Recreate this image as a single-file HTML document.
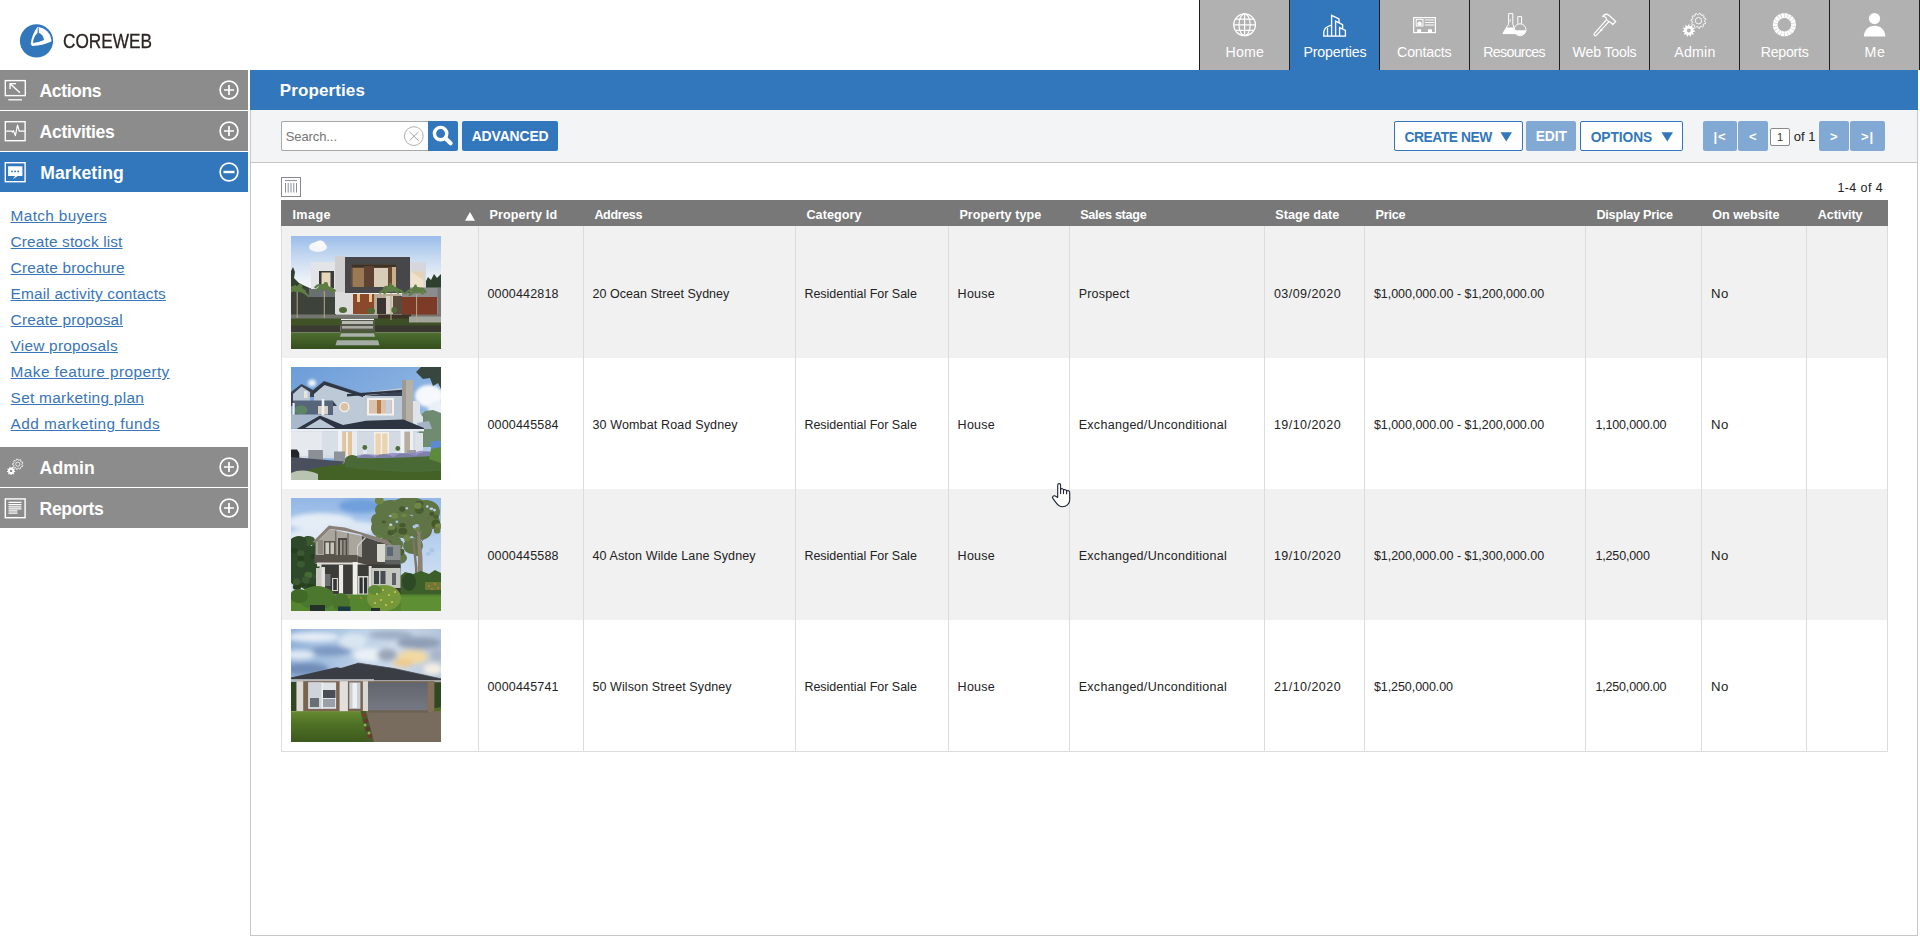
<!DOCTYPE html>
<html lang="en">
<head>
<meta charset="utf-8">
<title>Properties - COREWEB</title>
<style>
*{box-sizing:border-box;margin:0;padding:0}
html,body{width:1920px;height:937px;overflow:hidden;background:#fff}
body{font-family:"Liberation Sans",Arial,sans-serif;color:#222;position:relative}
.a{position:absolute}
.t{position:absolute;white-space:pre}
#brand{position:absolute;left:62.5px;top:27px;font-size:20.4px;line-height:28px;color:#2a2422;-webkit-text-stroke:.3px #2a2422;transform-origin:0 50%;transform:scaleX(.845);white-space:nowrap}
.tab{position:absolute;top:0;width:91px;height:70px;background:#b1b1b1;border-left:1px solid #1f1f1f}
.tab.on{background:#3277bc}
.tab svg{position:absolute;left:31px;top:11px;width:28px;height:28px;overflow:visible}
.si{position:absolute;left:0;width:248px;height:40px;background:#8c8c8c}
.si.on{background:#3277bc}
.si svg{position:absolute;top:9px;width:22px;height:22px;overflow:visible}
.si svg.ic{left:4px}
.si svg.pm{left:218px}
.btn{position:absolute;top:121px;height:30px;border-radius:2px}
.bb{background:#3277bc}
.bl{background:#82a9d4}
.bw{background:#fff;border:1px solid #3277bc}
.row{position:absolute;left:281px;width:1607px;height:131.33px;border-left:1px solid #dcdcdc;border-right:1px solid #dcdcdc}
.row.g{background:#f1f1f1}
.vl{position:absolute;top:226px;width:1px;height:525px;background:#dcdcdc}
.ph{position:absolute;left:291px;width:150px;height:113px;display:block}
</style>
</head>
<body>
<header>
<svg class="a" style="left:19px;top:23px" width="36" height="36" viewBox="19 23 36 36"><circle cx="36.5" cy="40.9" r="16.6" fill="#3277bc"/><path d="M37.5 26.9A14.6 14.6 0 0 1 51.4 41.6C45.5 44.4 38.3 46 32.2 45.9L30.7 43.9C31.6 37.2 34 31 37.5 26.9Z" fill="#fff"/><path d="M37.8 27.9L38.7 27.6L38.8 32.8C41.8 33.9 43.7 36.9 44 40.1C40.6 41.6 36.6 42.8 33 43.1C33.1 39.2 34.7 35.2 37.5 33Z" fill="#3277bc"/></svg>

<div id="brand">COREWEB</div>
<nav>
<div class="tab" style="left:1199px"><svg viewBox="0 0 28 28"><g fill="none" stroke="#fff" stroke-width="1.2"><circle cx="13.6" cy="13.8" r="10.9"/><ellipse cx="13.6" cy="13.8" rx="5.6" ry="10.9"/><path d="M13.6 2.9V24.7M2.7 13.8H24.5M4.4 8.2H22.8M4.4 19.4H22.8"/></g></svg>
</div>
<span class="t" style="left:1225.6px;top:42.2px;font-size:14.2px;line-height:20px;letter-spacing:0.114px;color:#fff;">Home</span>
<div class="tab on" style="left:1289px"><svg viewBox="0 0 28 28"><g fill="none" stroke="#fff" stroke-width="1.35" stroke-linejoin="miter"><path d="M10.6 25V4.4L18 7.9V12"/><path d="M14.6 25V10.2L21.6 13.6V17.4"/><path d="M18.6 25V16.6L24.4 19.4V25"/><path d="M10.6 14.2C6.5 15.2 3.2 17.6 2.8 20.8V25"/><path d="M6.5 16.8V25"/><path d="M2.1 25.1H25.1"/></g></svg>
</div>
<span class="t" style="left:1303.4px;top:42.2px;font-size:14.2px;line-height:20px;letter-spacing:-0.164px;color:#fff;">Properties</span>
<div class="tab" style="left:1379px"><svg viewBox="0 0 28 28"><rect x="2.7" y="6.6" width="21.7" height="15" fill="none" stroke="#fff" stroke-width="1.2"/><rect x="5.2" y="8.4" width="6.8" height="6.6" fill="none" stroke="#fff" stroke-width="1"/><path d="M6.6 14.6V12.2C6.6 10 10.6 10 10.6 12.2V14.6Z" fill="#fff"/><path d="M13.8 9H23.3M13.8 11.5H23.3M13.8 14H23.3" stroke="#fff" stroke-width="1"/><rect x="6.1" y="18.3" width="4" height="3.6" fill="#fff"/><rect x="17" y="18.3" width="4" height="3.6" fill="#fff"/></svg>
</div>
<span class="t" style="left:1397.1px;top:42.2px;font-size:14.2px;line-height:20px;letter-spacing:-0.214px;color:#fff;">Contacts</span>
<div class="tab" style="left:1469px"><svg viewBox="0 0 28 28"><path d="M7.6 2.6H11.8V13.2L15.2 22.6H1.8L7.6 13.2Z" fill="none" stroke="#fff" stroke-width="1"/><path d="M5.6 16.4H13L15.2 22.6H1.8Z" fill="#fff"/><path d="M16.8 5.6H20.6V12.8" fill="none" stroke="#fff" stroke-width="1"/><path d="M16.8 5.6V12.8" stroke="#fff" stroke-width="1"/><circle cx="19" cy="18.8" r="6" fill="none" stroke="#fff" stroke-width="1"/><path d="M13.1 19.2H24.9A6 6 0 0 1 13.1 19.2Z" fill="#fff"/><path d="M9.2 8V11" stroke="#fff" stroke-width=".8"/></svg>
</div>
<span class="t" style="left:1483.2px;top:42.2px;font-size:14.2px;line-height:20px;letter-spacing:-0.666px;color:#fff;">Resources</span>
<div class="tab" style="left:1559px"><svg viewBox="0 0 28 28"><g fill="none" stroke="#fff" stroke-width="1.25" stroke-linejoin="round"><path d="M15.6 8.6L3.3 22.6C2.3 23.8 4 25.6 5.3 24.4L17.9 10.6"/><path d="M9.6 18.2L11.2 19.9"/><path d="M11.7 5.3C13.4 3.3 16 2.8 17.9 4.2L24.7 10.5L21.8 13.5L19.4 11.2L18.2 10.9L15.4 8.4C15.7 6.8 14.6 5.6 11.7 5.3Z"/></g></svg>
</div>
<span class="t" style="left:1572.5px;top:42.2px;font-size:14.2px;line-height:20px;letter-spacing:-0.192px;color:#fff;">Web Tools</span>
<div class="tab" style="left:1649px"><svg viewBox="0 0 28 28"><path d="M13.89 19.80L13.73 20.92L12.14 21.01L11.79 21.79L12.76 23.05L12.02 23.90L10.63 23.12L9.92 23.58L10.05 25.17L8.97 25.49L8.23 24.08L7.37 24.08L6.63 25.49L5.55 25.17L5.68 23.58L4.97 23.12L3.58 23.90L2.84 23.05L3.81 21.79L3.46 21.01L1.87 20.92L1.71 19.80L3.21 19.27L3.33 18.43L2.04 17.49L2.51 16.46L4.06 16.82L4.62 16.18L4.04 14.70L4.99 14.08L6.10 15.23L6.92 14.99L7.23 13.43L8.37 13.43L8.68 14.99L9.50 15.23L10.61 14.08L11.56 14.70L10.98 16.18L11.54 16.82L13.09 16.46L13.56 17.49L12.27 18.43L12.39 19.27Z" fill="#fff"/><circle cx="7.8" cy="19.5" r="1.9" fill="#b1b1b1"/><path d="M24.77 11.56L24.30 12.86L22.75 12.81L22.08 13.73L22.61 15.19L21.51 16.04L20.23 15.16L19.18 15.57L18.83 17.08L17.45 17.20L16.85 15.76L15.74 15.54L14.63 16.63L13.40 15.98L13.67 14.45L12.86 13.66L11.34 13.98L10.66 12.77L11.71 11.63L11.46 10.52L10.00 9.97L10.08 8.58L11.59 8.19L11.97 7.13L11.05 5.87L11.87 4.75L13.34 5.24L14.24 4.54L14.14 2.99L15.44 2.49L16.42 3.70L17.54 3.60L18.30 2.24L19.66 2.52L19.83 4.06L20.83 4.59L22.21 3.86L23.20 4.83L22.51 6.22L23.07 7.21L24.62 7.33L24.93 8.69L23.60 9.48L23.53 10.61Z" fill="none" stroke="#fff" stroke-width=".9"/><circle cx="17.5" cy="9.7" r="3.2" fill="none" stroke="#fff" stroke-width=".9"/></svg>
</div>
<span class="t" style="left:1674.3px;top:42.2px;font-size:14.2px;line-height:20px;letter-spacing:0.195px;color:#fff;">Admin</span>
<div class="tab" style="left:1739px"><svg viewBox="0 0 28 28"><path d="M13.63 2.10A11.6 11.6 0 0 1 17.15 2.72L15.57 7.36A6.7 6.7 0 0 0 13.53 7.00ZM17.58 2.88A11.6 11.6 0 0 1 20.68 4.67L17.60 8.48A6.7 6.7 0 0 0 15.82 7.45ZM21.03 4.96A11.6 11.6 0 0 1 23.33 7.70L19.13 10.23A6.7 6.7 0 0 0 17.81 8.65ZM23.56 8.10A11.6 11.6 0 0 1 24.78 11.46L19.97 12.40A6.7 6.7 0 0 0 19.27 10.47ZM24.86 11.91A11.6 11.6 0 0 1 24.86 15.49L20.02 14.73A6.7 6.7 0 0 0 20.02 12.67ZM24.78 15.94A11.6 11.6 0 0 1 23.56 19.30L19.27 16.93A6.7 6.7 0 0 0 19.97 15.00ZM23.33 19.70A11.6 11.6 0 0 1 21.03 22.44L17.81 18.75A6.7 6.7 0 0 0 19.13 17.17ZM20.68 22.73A11.6 11.6 0 0 1 17.58 24.52L15.82 19.95A6.7 6.7 0 0 0 17.60 18.92ZM17.15 24.68A11.6 11.6 0 0 1 13.63 25.30L13.53 20.40A6.7 6.7 0 0 0 15.57 20.04ZM13.17 25.30A11.6 11.6 0 0 1 9.65 24.68L11.23 20.04A6.7 6.7 0 0 0 13.27 20.40ZM9.22 24.52A11.6 11.6 0 0 1 6.12 22.73L9.20 18.92A6.7 6.7 0 0 0 10.98 19.95ZM5.77 22.44A11.6 11.6 0 0 1 3.47 19.70L7.67 17.17A6.7 6.7 0 0 0 8.99 18.75ZM3.24 19.30A11.6 11.6 0 0 1 2.02 15.94L6.83 15.00A6.7 6.7 0 0 0 7.53 16.93ZM1.94 15.49A11.6 11.6 0 0 1 1.94 11.91L6.78 12.67A6.7 6.7 0 0 0 6.78 14.73ZM2.02 11.46A11.6 11.6 0 0 1 3.24 8.10L7.53 10.47A6.7 6.7 0 0 0 6.83 12.40ZM3.47 7.70A11.6 11.6 0 0 1 5.77 4.96L8.99 8.65A6.7 6.7 0 0 0 7.67 10.23ZM6.12 4.67A11.6 11.6 0 0 1 9.22 2.88L10.98 7.45A6.7 6.7 0 0 0 9.20 8.48ZM9.65 2.72A11.6 11.6 0 0 1 13.17 2.10L13.27 7.00A6.7 6.7 0 0 0 11.23 7.36Z" fill="#fff"/></svg>
</div>
<span class="t" style="left:1760.8px;top:42.2px;font-size:14.2px;line-height:20px;letter-spacing:-0.281px;color:#fff;">Reports</span>
<div class="tab" style="left:1829px"><svg viewBox="0 0 28 28"><circle cx="13.5" cy="7.5" r="5.6" fill="#fff"/><path d="M2.8 25.4C3.2 18.6 7.8 14.7 13.6 14.7C19.4 14.7 24 18.6 24.4 25.4Z" fill="#fff"/></svg>
</div>
<span class="t" style="left:1864.4px;top:42.2px;font-size:14.2px;line-height:20px;letter-spacing:0.781px;color:#fff;">Me</span>
<div class="a" style="left:1919px;top:0;width:1px;height:70px;background:#1f1f1f"></div>
</nav>
</header>
<aside>
<div class="si" style="top:70px"><svg class="ic" viewBox="0 0 22 22"><rect x="1.3" y="1.6" width="20" height="15" fill="none" stroke="#fff" stroke-width="1.4"/><path d="M15.9 13.7L6.3 4.8M6.1 10V4.6H12" fill="none" stroke="#fff" stroke-width="1.4"/><path d="M4.3 20.8H18" stroke="#fff" stroke-width="1.3"/></svg>
<svg class="pm" viewBox="0 0 22 22"><circle cx="11" cy="11" r="8.9" fill="none" stroke="#fff" stroke-width="1.7"/><path d="M6 11H16M11 6V16" stroke="#fff" stroke-width="1.7"/></svg>
</div>
<span class="t" style="left:39.6px;top:78.6px;font-size:17.6px;line-height:25px;letter-spacing:-0.439px;font-weight:bold;color:#fff;">Actions</span>
<div class="si" style="top:111px"><svg class="ic" viewBox="0 0 22 22"><rect x="1.3" y="1.7" width="19.8" height="19" fill="none" stroke="#fff" stroke-width="1.4"/><path d="M1.5 11.1H7.6L8.6 12L9.4 10.6L11.4 15.6L13.5 5L15.2 11.1H21" fill="none" stroke="#fff" stroke-width="1.2" stroke-linejoin="round"/></svg>
<svg class="pm" viewBox="0 0 22 22"><circle cx="11" cy="11" r="8.9" fill="none" stroke="#fff" stroke-width="1.7"/><path d="M6 11H16M11 6V16" stroke="#fff" stroke-width="1.7"/></svg>
</div>
<span class="t" style="left:39.6px;top:119.6px;font-size:17.6px;line-height:25px;letter-spacing:-0.337px;font-weight:bold;color:#fff;">Activities</span>
<div class="si on" style="top:152px"><svg class="ic" viewBox="0 0 22 22"><rect x="1.3" y="1.7" width="19.8" height="19" fill="none" stroke="#fff" stroke-width="1.4"/><path d="M4.1 5.2H18.4V15.1H13.6L9.2 17.9L11 15.1H4.1Z" fill="#fff"/><circle cx="8" cy="10.4" r=".9" fill="#3277bc"/><circle cx="11.1" cy="10.4" r=".9" fill="#3277bc"/><circle cx="14.2" cy="10.4" r=".9" fill="#3277bc"/></svg>
<svg class="pm" viewBox="0 0 22 22"><circle cx="11" cy="11" r="8.9" fill="none" stroke="#fff" stroke-width="1.7"/><path d="M5.5 11H16.5" stroke="#fff" stroke-width="2.4"/></svg>
</div>
<span class="t" style="left:40.3px;top:160.6px;font-size:17.6px;line-height:25px;letter-spacing:0.036px;font-weight:bold;color:#fff;">Marketing</span>
<div class="si" style="top:447px"><svg class="ic" viewBox="0 0 22 22"><path d="M11.29 15.15L11.13 16.10L9.94 16.13L9.59 16.75L10.15 17.79L9.41 18.40L8.49 17.67L7.82 17.92L7.58 19.07L6.62 19.07L6.38 17.92L5.71 17.67L4.79 18.40L4.05 17.79L4.61 16.75L4.26 16.13L3.07 16.10L2.91 15.15L4.01 14.71L4.13 14.02L3.25 13.23L3.73 12.40L4.85 12.77L5.39 12.31L5.22 11.14L6.12 10.81L6.75 11.82L7.45 11.82L8.08 10.81L8.98 11.14L8.81 12.31L9.35 12.77L10.47 12.40L10.95 13.23L10.07 14.02L10.19 14.71Z" fill="#fff"/><circle cx="7.1" cy="14.9" r="1.2" fill="#8c8c8c"/><path d="M18.83 9.54L18.39 10.64L17.16 10.55L16.54 11.25L16.79 12.45L15.75 13.02L14.87 12.16L13.94 12.30L13.36 13.38L12.19 13.14L12.07 11.92L11.27 11.43L10.13 11.88L9.39 10.95L10.09 9.94L9.79 9.05L8.62 8.66L8.65 7.47L9.84 7.15L10.18 6.27L9.54 5.23L10.32 4.33L11.44 4.85L12.27 4.40L12.45 3.18L13.62 3.00L14.15 4.11L15.07 4.30L15.99 3.48L17.00 4.10L16.69 5.30L17.28 6.03L18.51 5.99L18.89 7.12L17.88 7.84L17.86 8.77Z" fill="none" stroke="#fff" stroke-width=".8"/><circle cx="13.8" cy="8.2" r="2.1" fill="none" stroke="#fff" stroke-width=".8"/></svg>
<svg class="pm" viewBox="0 0 22 22"><circle cx="11" cy="11" r="8.9" fill="none" stroke="#fff" stroke-width="1.7"/><path d="M6 11H16M11 6V16" stroke="#fff" stroke-width="1.7"/></svg>
</div>
<span class="t" style="left:39.6px;top:455.6px;font-size:17.6px;line-height:25px;letter-spacing:0.116px;font-weight:bold;color:#fff;">Admin</span>
<div class="si" style="top:488px"><svg class="ic" viewBox="0 0 22 22"><rect x="1.3" y="1.9" width="19.8" height="18.8" fill="none" stroke="#fff" stroke-width="1.4"/><path d="M4.5 5.4H17.4M4.5 7.6H17.4M4.5 9.8H17.4M4.5 11.9H17.4M4.5 13.9H13.5M4.5 16H13.5" stroke="#fff" stroke-width="1.25"/></svg>
<svg class="pm" viewBox="0 0 22 22"><circle cx="11" cy="11" r="8.9" fill="none" stroke="#fff" stroke-width="1.7"/><path d="M6 11H16M11 6V16" stroke="#fff" stroke-width="1.7"/></svg>
</div>
<span class="t" style="left:39.6px;top:496.6px;font-size:17.6px;line-height:25px;letter-spacing:-0.381px;font-weight:bold;color:#fff;">Reports</span>
<a class="t" style="left:10.6px;top:205.1px;font-size:15.4px;line-height:22px;letter-spacing:0.328px;color:#3975b9;text-decoration:underline;">Match buyers</a>
<a class="t" style="left:10.6px;top:231.1px;font-size:15.4px;line-height:22px;letter-spacing:0.145px;color:#3975b9;text-decoration:underline;">Create stock list</a>
<a class="t" style="left:10.6px;top:257.1px;font-size:15.4px;line-height:22px;letter-spacing:0.199px;color:#3975b9;text-decoration:underline;">Create brochure</a>
<a class="t" style="left:10.6px;top:283.1px;font-size:15.4px;line-height:22px;letter-spacing:0.173px;color:#3975b9;text-decoration:underline;">Email activity contacts</a>
<a class="t" style="left:10.6px;top:309.1px;font-size:15.4px;line-height:22px;letter-spacing:0.192px;color:#3975b9;text-decoration:underline;">Create proposal</a>
<a class="t" style="left:10.6px;top:335.1px;font-size:15.4px;line-height:22px;letter-spacing:0.231px;color:#3975b9;text-decoration:underline;">View proposals</a>
<a class="t" style="left:10.6px;top:361.1px;font-size:15.4px;line-height:22px;letter-spacing:0.407px;color:#3975b9;text-decoration:underline;">Make feature property</a>
<a class="t" style="left:10.6px;top:387.1px;font-size:15.4px;line-height:22px;letter-spacing:0.287px;color:#3975b9;text-decoration:underline;">Set marketing plan</a>
<a class="t" style="left:10.6px;top:413.1px;font-size:15.4px;line-height:22px;letter-spacing:0.440px;color:#3975b9;text-decoration:underline;">Add marketing funds</a>
</aside>
<main>
<div class="a" style="left:250px;top:110px;width:1668px;height:826px;border:1px solid #c8c8c8;border-top:none"></div>
<div class="a" style="left:250px;top:70px;width:1668px;height:40px;background:#3277bc"></div>
<span class="t" style="left:279.7px;top:78.6px;font-size:17px;line-height:24px;letter-spacing:0.123px;font-weight:bold;color:#fff;">Properties</span>
<div class="a" style="left:251px;top:110px;width:1666px;height:53px;background:#f3f4f6;border-bottom:1px solid #c4c4c4"></div>
<div class="a" style="left:281px;top:121px;width:148px;height:30px;background:#fff;border:1px solid #a9a9a9;border-right:none;border-radius:2px 0 0 2px"></div>
<span class="t" style="left:285.8px;top:127.9px;font-size:13px;line-height:18px;letter-spacing:-0.104px;color:#757575;">Search...</span>
<svg class="a" style="left:402px;top:124px" width="24" height="24" viewBox="402 124 24 24"><circle cx="413.8" cy="136.1" r="9.4" fill="#fff" stroke="#b0b0b0" stroke-width="1"/><path d="M409.5 131.9L418.5 140.6M418.5 131.9L409.5 140.6" stroke="#a6a6a6" stroke-width="1"/></svg>

<div class="btn bb" style="left:428px;width:30px;border-radius:0 2px 2px 0"></div><svg class="a" style="left:428px;top:121px" width="30" height="30" viewBox="428 121 30 30"><circle cx="440.6" cy="133.6" r="6.2" fill="none" stroke="#fff" stroke-width="3.4"/><path d="M445.6 138.4L450.6 143.2" stroke="#fff" stroke-width="4.2" stroke-linecap="round"/></svg>

<div class="btn bb" style="left:462px;width:96px"></div>
<span class="t" style="left:471.7px;top:126.9px;font-size:13.9px;line-height:19px;letter-spacing:-0.112px;font-weight:bold;color:#fff;">ADVANCED</span>
<div class="btn bw" style="left:1394px;width:129px"></div>
<span class="t" style="left:1404.6px;top:127.5px;font-size:13.8px;line-height:19px;letter-spacing:-0.459px;font-weight:bold;color:#3277bc;">CREATE NEW</span>
<svg class="a" style="left:1500px;top:132px" width="13" height="10" viewBox="0 0 13 10"><path d="M0.500 0.300H12L6.250 9.400Z" fill="#3277bc"/></svg>
<div class="btn bl" style="left:1526px;width:50px"></div>
<span class="t" style="left:1535.7px;top:127.0px;font-size:13.8px;line-height:19px;letter-spacing:-0.079px;font-weight:bold;color:#fff;">EDIT</span>
<div class="btn bw" style="left:1580px;width:103px"></div>
<span class="t" style="left:1590.7px;top:127.5px;font-size:13.8px;line-height:19px;letter-spacing:-0.082px;font-weight:bold;color:#3277bc;">OPTIONS</span>
<svg class="a" style="left:1660.500px;top:132px" width="13" height="10" viewBox="0 0 13 10"><path d="M0.500 0.300H12L6.250 9.400Z" fill="#3277bc"/></svg>
<div class="btn bl" style="left:1703px;width:34px"></div>
<span class="t" style="left:1713.4px;top:127.5px;font-size:13px;line-height:18px;letter-spacing:0.966px;font-weight:bold;color:#fff;">|&lt;</span>
<div class="btn bl" style="left:1738px;width:30px"></div>
<span class="t" style="left:1748.9px;top:127.5px;font-size:13px;line-height:18px;font-weight:bold;color:#fff;">&lt;</span>
<div class="btn bl" style="left:1819px;width:30px"></div>
<span class="t" style="left:1829.9px;top:127.5px;font-size:13px;line-height:18px;font-weight:bold;color:#fff;">&gt;</span>
<div class="btn bl" style="left:1850px;width:35px"></div>
<span class="t" style="left:1860.9px;top:127.5px;font-size:13px;line-height:18px;letter-spacing:0.966px;font-weight:bold;color:#fff;">&gt;|</span>
<div class="a" style="left:1770px;top:128px;width:20px;height:18px;background:#fff;border:1px solid #8a8a8a;border-radius:2px"></div>
<span class="t" style="left:1777.0px;top:129.5px;font-size:11px;line-height:15px;color:#333;">1</span>
<span class="t" style="left:1793.8px;top:128.0px;font-size:13px;line-height:18px;letter-spacing:0.038px;">of 1</span>
<svg class="a" style="left:281px;top:177px" width="20" height="20" viewBox="0 0 20 20"><rect x=".5" y=".5" width="19" height="19" fill="#fff" stroke="#8a8494" stroke-width="1"/><path d="M4 3.5H16" stroke="#9a9a9a" stroke-width="1.2"/><path d="M4.5 6V15.5M7.2 6V15.5M10 6V15.5M12.8 6V15.5M15.5 6V15.5" stroke="#8c8ca0" stroke-width="1"/></svg>

<span class="t" style="left:1837.4px;top:178.6px;font-size:12.5px;line-height:18px;letter-spacing:0.401px;">1-4 of 4</span>
<div class="row g" style="top:226px;height:132px"></div>
<div class="row" style="top:358px;height:131px"></div>
<div class="row g" style="top:489px;height:131px"></div>
<div class="row" style="top:620px;height:131px"></div>
<div class="a" style="left:281px;top:200px;width:1607px;height:26px;background:#787878"></div>
<div class="a" style="left:281px;top:751px;width:1607px;height:1px;background:#dcdcdc"></div>
<div class="vl" style="left:478px"></div>
<div class="vl" style="left:583px"></div>
<div class="vl" style="left:795px"></div>
<div class="vl" style="left:948px"></div>
<div class="vl" style="left:1069px"></div>
<div class="vl" style="left:1264px"></div>
<div class="vl" style="left:1364px"></div>
<div class="vl" style="left:1585px"></div>
<div class="vl" style="left:1701px"></div>
<div class="vl" style="left:1806px"></div>
<span class="t" style="left:292.4px;top:205.7px;font-size:12.6px;line-height:18px;letter-spacing:0.448px;font-weight:bold;color:#fff;">Image</span>
<span class="t" style="left:489.4px;top:205.7px;font-size:12.6px;line-height:18px;letter-spacing:0.132px;font-weight:bold;color:#fff;">Property Id</span>
<span class="t" style="left:594.4px;top:205.7px;font-size:12.6px;line-height:18px;letter-spacing:-0.384px;font-weight:bold;color:#fff;">Address</span>
<span class="t" style="left:806.4px;top:205.7px;font-size:12.6px;line-height:18px;letter-spacing:0.087px;font-weight:bold;color:#fff;">Category</span>
<span class="t" style="left:959.4px;top:205.7px;font-size:12.6px;line-height:18px;letter-spacing:0.064px;font-weight:bold;color:#fff;">Property type</span>
<span class="t" style="left:1080.2px;top:205.7px;font-size:12.6px;line-height:18px;letter-spacing:-0.286px;font-weight:bold;color:#fff;">Sales stage</span>
<span class="t" style="left:1275.2px;top:205.7px;font-size:12.6px;line-height:18px;letter-spacing:0.055px;font-weight:bold;color:#fff;">Stage date</span>
<span class="t" style="left:1375.4px;top:205.7px;font-size:12.6px;line-height:18px;letter-spacing:-0.153px;font-weight:bold;color:#fff;">Price</span>
<span class="t" style="left:1596.4px;top:205.7px;font-size:12.6px;line-height:18px;letter-spacing:-0.201px;font-weight:bold;color:#fff;">Display Price</span>
<span class="t" style="left:1712.2px;top:205.7px;font-size:12.6px;line-height:18px;letter-spacing:0.024px;font-weight:bold;color:#fff;">On website</span>
<span class="t" style="left:1817.8px;top:205.7px;font-size:12.6px;line-height:18px;letter-spacing:-0.100px;font-weight:bold;color:#fff;">Activity</span>
<svg class="a" style="left:464px;top:211px" width="12" height="10" viewBox="0 0 12 10"><path d="M1 9.800L6 0.900L11 9.800Z" fill="#fff"/></svg>
<svg class="ph" style="top:236px" viewBox="0 0 150 113" preserveAspectRatio="none"><defs><linearGradient id="s0" x1="0" y1="0" x2="0" y2="1"><stop offset="0" stop-color="#9bbdea"/><stop offset=".35" stop-color="#c3d8f0"/><stop offset=".8" stop-color="#eef3f8"/><stop offset="1" stop-color="#f4f6f8"/></linearGradient><linearGradient id="l0" x1="0" y1="0" x2="0" y2="1"><stop offset="0" stop-color="#4e6e30"/><stop offset="1" stop-color="#354e1e"/></linearGradient><filter id="b0"><feGaussianBlur stdDeviation=".5"/></filter></defs>
<rect width="150" height="56" fill="url(#s0)"/>
<ellipse cx="27" cy="11" rx="9" ry="5" fill="#f4f6f8" filter="url(#b0)"/><ellipse cx="29" cy="8" rx="5" ry="3.5" fill="#fafafa" filter="url(#b0)"/>
<g filter="url(#b0)">
<path d="M0 35L2 31L4 36L3 42L8 47L14 50L21 53V78H0Z" fill="#33402f"/>
<path d="M134 47L137 41L140 44L143 38L146 42L150 38V54H134Z" fill="#2f3f2f"/>
<rect x="0" y="52" width="45" height="27" fill="#3c423a"/><rect x="18" y="52" width="27" height="9" fill="#6b6f6f"/>
<rect x="20" y="26" width="25" height="27" fill="#e3e4e8"/>
<rect x="28" y="35" width="15" height="17" fill="#3b3a38"/><rect x="30.5" y="36.5" width="9" height="15" fill="#e6d6ba"/>
<rect x="118" y="26" width="17" height="26" fill="#d6d7dc"/>
<rect x="120" y="35.5" width="12.5" height="16" fill="#e4d3b4"/><path d="M120 35.5L132.5 44V51.5H120Z" fill="#efe2ca"/>
<rect x="111" y="51.5" width="39" height="10" fill="#8c8c8f"/>
<rect x="44" y="20" width="10.5" height="58" fill="#cfcfd0"/>
<rect x="44" y="56" width="18" height="22" fill="#dcdcdc"/>
<rect x="54" y="21" width="65" height="36" fill="#47474a"/>
<rect x="60.5" y="28.5" width="44.5" height="22.5" fill="#7b5a3c"/>
<rect x="60.5" y="28.5" width="44.5" height="3" fill="#3b302a"/>
<rect x="62" y="32" width="11" height="19" fill="#9a7a55"/>
<rect x="73" y="30" width="10" height="21" fill="#5e4330"/>
<rect x="83" y="32" width="14" height="19" fill="#d8cdb8"/>
<rect x="97" y="31" width="4" height="20" fill="#6a4a32"/><rect x="101" y="31" width="4" height="20" fill="#c9b08c"/>
<rect x="62" y="58" width="21.5" height="20" fill="#8a4a2a"/>
<rect x="66" y="58" width="3" height="8" fill="#e9c58c"/><rect x="78" y="58" width="3" height="8" fill="#e9c58c"/>
<rect x="83.5" y="58" width="27" height="20" fill="#b7ab98"/>
<rect x="86" y="62" width="9" height="16" fill="#3a3532"/><rect x="95" y="60" width="7" height="18" fill="#d9d2c4"/><rect x="102" y="60" width="9" height="18" fill="#5a4a3c"/>
<rect x="111" y="61" width="35.5" height="20" fill="#7c3b27"/>
<rect x="146.500" y="52" width="3.500" height="30" fill="#77787a"/>
<rect x="0" y="78.500" width="150" height="4.500" fill="#74756f"/>
<rect x="87" y="78.500" width="33" height="4.500" fill="#3d3027"/>
<rect x="0" y="82.500" width="50" height="7.500" fill="#3f5228"/><rect x="83" y="82.500" width="67" height="7.500" fill="#3c4f27"/>
<rect x="118" y="80.500" width="32" height="6" fill="#a3a49c"/>
<rect x="0" y="89.500" width="49.500" height="7" fill="#3a3a33"/><rect x="84" y="89.500" width="66" height="7" fill="#38382f"/>
<rect x="49.500" y="84" width="34.500" height="13" fill="#55564c"/>
<rect x="51" y="85" width="31" height="3" fill="#b9bab2"/><rect x="51" y="90" width="31" height="2.600" fill="#a9aaa2"/>
</g>
<rect x="0" y="96.500" width="150" height="16.500" fill="url(#l0)"/>
<rect x="49.500" y="94" width="34.500" height="3" fill="#4e5b38"/>
<path d="M50 97.200H83L84 100.800H49Z" fill="#a9b1aa"/><path d="M46 104.200H87L88.500 109.200H44.500Z" fill="#a3aca5"/>
<g filter="url(#b0)"><path d="M6.2 55.0Q0.6 52.5 -4.0 57.6M6.2 55.0Q3.2 51.5 0.7 55.0M6.2 55.0Q1.4 48.6 -2.6 53.6M6.2 55.0Q4.3 47.6 2.7 51.7M6.2 55.0Q6.8 48.4 7.2 52.0M6.2 55.0Q8.6 45.5 10.5 50.5M6.2 55.0Q8.5 49.2 10.4 52.9M6.2 55.0Q10.5 51.4 14.0 55.7M6.2 55.0Q12.3 54.6 17.2 60.1" fill="none" stroke="#5d7d45" stroke-width="2.2" stroke-linecap="round"/><path d="M33.3 53.0Q29.1 50.7 25.7 54.8M33.3 53.0Q29.3 49.7 26.0 53.8M33.3 53.0Q28.4 46.2 24.4 51.3M33.3 53.0Q32.3 46.9 31.5 50.3M33.3 53.0Q33.8 44.5 34.1 48.8M33.3 53.0Q34.8 43.9 36.0 48.6M33.3 53.0Q35.5 48.1 37.3 51.5M33.3 53.0Q39.1 49.5 43.8 54.7M33.3 53.0Q38.2 51.6 42.2 56.2" fill="none" stroke="#5d7d45" stroke-width="2.2" stroke-linecap="round"/><path d="M100.0 55.0Q96.4 53.4 93.4 57.2M100.0 55.0Q94.0 51.5 89.1 56.8M100.0 55.0Q96.0 47.9 92.8 52.7M100.0 55.0Q99.1 48.5 98.3 52.0M100.0 55.0Q99.6 44.2 99.3 49.4M100.0 55.0Q101.2 47.3 102.2 51.4M100.0 55.0Q103.5 49.5 106.3 53.7M100.0 55.0Q106.6 50.9 112.0 56.6M100.0 55.0Q103.9 52.9 107.1 56.8" fill="none" stroke="#5d7d45" stroke-width="2.2" stroke-linecap="round"/><path d="M125.6 56.0Q121.8 55.1 118.6 59.1M125.6 56.0Q119.6 51.9 114.6 57.2M125.6 56.0Q123.3 50.4 121.4 54.0M125.6 56.0Q124.0 48.5 122.7 52.6M125.6 56.0Q124.7 46.3 124.0 51.1M125.6 56.0Q126.9 50.2 127.9 53.6M125.6 56.0Q130.1 50.0 133.8 54.7M125.6 56.0Q130.5 51.5 134.4 56.2M125.6 56.0Q129.0 53.8 131.8 57.5" fill="none" stroke="#5d7d45" stroke-width="2.2" stroke-linecap="round"/><ellipse cx="6" cy="53" rx="5" ry="3" fill="#5d7d45"/><ellipse cx="33" cy="51" rx="5" ry="3" fill="#5d7d45"/><ellipse cx="100" cy="53" rx="5" ry="3" fill="#5d7d45"/><ellipse cx="126" cy="54" rx="5" ry="3" fill="#5d7d45"/><ellipse cx="52" cy="74" rx="4" ry="3" fill="#4f6b38"/><ellipse cx="80" cy="75" rx="4" ry="3" fill="#4f6b38"/><ellipse cx="103" cy="74" rx="3" ry="3" fill="#4f6b38"/></g>
<g stroke="#b9a888" stroke-width="1"><path d="M6.200 56V82"/><path d="M33.300 55V82"/><path d="M100 57V84"/><path d="M125.600 58V86"/></g>
</svg>

<span class="t" style="left:487.4px;top:284.9px;font-size:12.5px;line-height:18px;letter-spacing:0.185px;">0000442818</span>
<span class="t" style="left:592.4px;top:284.9px;font-size:12.5px;line-height:18px;letter-spacing:0.036px;">20 Ocean Street Sydney</span>
<span class="t" style="left:804.4px;top:284.9px;font-size:12.5px;line-height:18px;letter-spacing:-0.006px;">Residential For Sale</span>
<span class="t" style="left:957.6px;top:284.9px;font-size:12.5px;line-height:18px;letter-spacing:0.265px;">House</span>
<span class="t" style="left:1078.7px;top:284.9px;font-size:12.5px;line-height:18px;letter-spacing:0.194px;">Prospect</span>
<span class="t" style="left:1273.9px;top:284.9px;font-size:12.5px;line-height:18px;letter-spacing:0.460px;">03/09/2020</span>
<span class="t" style="left:1373.9px;top:284.9px;font-size:12.5px;line-height:18px;letter-spacing:-0.028px;">$1,000,000.00 - $1,200,000.00</span>
<span class="t" style="left:1711.0px;top:284.9px;font-size:13.2px;line-height:18px;letter-spacing:0.541px;">No</span>
<svg class="ph" style="top:367px" viewBox="0 0 150 113" preserveAspectRatio="none"><defs><linearGradient id="s1" x1="0" y1="0" x2="1" y2="1"><stop offset="0" stop-color="#6c9cd8"/><stop offset=".6" stop-color="#8fb5e2"/><stop offset="1" stop-color="#c9dcf0"/></linearGradient><filter id="b1"><feGaussianBlur stdDeviation=".45"/></filter><filter id="c1"><feGaussianBlur stdDeviation="1.6"/></filter></defs>
<rect width="150" height="113" fill="url(#s1)"/>
<g filter="url(#c1)"><ellipse cx="138" cy="29" rx="14" ry="11" fill="#f6f8fb"/><ellipse cx="146" cy="42" rx="9" ry="8" fill="#e9f0f8"/><ellipse cx="21" cy="16" rx="4" ry="3.500" fill="#eef3f9"/></g>
<g filter="url(#b1)">
<path d="M125 5L130 0H150V22L147 16L142 19L139 11L132 12Z" fill="#2f3e2f" opacity=".92"/>
<path d="M128 50L134 44L142 43L150 46V80H128Z" fill="#6f8c70"/>
<rect x="140" y="74" width="10" height="10" fill="#5b8bd0"/>
<path d="M122 34H129V46L132 50V62H122Z" fill="#dfe4ea"/>
<path d="M126 56L138 54L141 62H128Z" fill="#a7b4c6"/>
<path d="M0 25L10.500 17L22 23L33 14L73 27L114 22L116 30H0Z" fill="#3a4252"/>
<path d="M2 27L10.500 19.500L19 25V34H2Z" fill="#b9c6d4"/><rect x="13" y="24" width="3.500" height="7" fill="#e8e4dc"/>
<path d="M74 27.500L82 24.500L112 21L113 24L74 29Z" fill="#c4ccd6"/>
<path d="M23 25L33.500 16.500L72 29V60H23Z" fill="#bdc9d7"/>
<path d="M21 25.500L33.500 15L74 28.500L73 30.500L33.500 18L23 27Z" fill="#2f3644"/>
<rect x="72" y="29" width="42" height="26" fill="#bcc8d5"/>
<path d="M56 27L114 22.500V25L56 29.500Z" fill="#2f3644"/>
<rect x="76" y="31" width="27" height="17.500" fill="#f3f1ee"/><rect x="78" y="33" width="23" height="13.500" fill="#d9c3ae"/><rect x="86" y="33" width="4" height="13.500" fill="#b77b4a"/><rect x="95" y="33" width="5" height="13.500" fill="#c9d0e0"/>
<rect x="111" y="13" width="11" height="43" fill="#b5b1a9"/><rect x="111" y="13" width="4" height="43" fill="#9d9a94"/>
<circle cx="53.400" cy="40" r="5.200" fill="#f5f3ef"/><circle cx="53.400" cy="40" r="3.900" fill="#dcc1a4"/>
<path d="M0 27L2 27V34H42L46 39H0Z" fill="#3a4252"/>
<rect x="2" y="33.500" width="40" height="14.500" fill="#56657a"/>
<ellipse cx="10" cy="43" rx="6.500" ry="4.500" fill="#5d8466"/>
<rect x="27" y="39" width="10" height="8.500" fill="#d7d0c6"/>
<rect x="30.700" y="32" width="2.600" height="16" fill="#eef0f2"/><rect x="1.500" y="36" width="2.200" height="14" fill="#eef0f2"/>
<rect x="0" y="47.500" width="28" height="14" fill="#a9b9cd"/>
<path d="M5.500 62L29 48.500L52 58L75 53.800L112.500 52.600L133 61V62.500H5.500Z" fill="#2d3442"/>
<path d="M14 61L29 52L44.500 61Z" fill="#b9c7d6"/>
<rect x="0" y="62" width="133" height="2.300" fill="#eceff2"/>
<rect x="0" y="64.300" width="126" height="27" fill="#d3dae3"/>
<rect x="0" y="64.300" width="31" height="24.500" fill="#e6e9ed"/>
<rect x="31" y="64.300" width="16" height="24" fill="#d9dfe6"/>
<rect x="51.500" y="65" width="9.500" height="24" fill="#e3c39a"/><rect x="55" y="65" width="2" height="24" fill="#f0eeea"/>
<rect x="61" y="64.300" width="5" height="27" fill="#e9ecef"/>
<rect x="83" y="65" width="15" height="25.500" fill="#f3f0ea"/><rect x="84.500" y="66.500" width="5.200" height="22.500" fill="#ecd3b0"/><rect x="91.200" y="66.500" width="5.200" height="22.500" fill="#ecd3b0"/>
<rect x="47" y="63" width="3.800" height="29" fill="#f0f2f4"/><rect x="109.500" y="63" width="3.800" height="29" fill="#f0f2f4"/><rect x="119" y="63" width="3.200" height="27" fill="#eef0f3"/>
<rect x="113.500" y="65" width="5.500" height="22" fill="#b8aea0"/>
<rect x="124" y="66" width="8" height="20" fill="#dfe3e8"/>
<rect x="17.300" y="83" width="14.600" height="12" fill="#8b8f96"/><rect x="43" y="84.500" width="11" height="14" fill="#8e9299"/><rect x="116" y="83" width="9" height="9" fill="#9a9da4"/>
<path d="M0 82.500H6L8.300 86V92.500H0Z" fill="#22252a"/>
<path d="M0 90L53 94.500L49 100L0 108.500Z" fill="#4a4f5c"/>
<rect x="72" y="81" width="3.600" height="7" fill="#e6e8ea"/><circle cx="73.800" cy="80.500" r="2.400" fill="#4d6d3c"/><rect x="105" y="82" width="3.600" height="7" fill="#e6e8ea"/><circle cx="106.800" cy="81.500" r="2.400" fill="#4d6d3c"/>
<path d="M24 101L52 97L56 93H150V113H0V110Z" fill="#456228"/>
<path d="M54 92C58 86 64 88 68 90C72 86 80 88 84 90C90 86 98 87 102 90C108 85 118 86 124 89C130 84 140 84 150 86V104C120 106 80 104 54 100Z" fill="#4a6a34"/>
<path d="M66 88.500C76 85.500 84 88.500 92 87.500C104 84.500 116 87.500 124 85.500C130 82.500 136 84 140 85.500V89C120 90.500 90 91.500 66 91Z" fill="#8b86c4" opacity=".8"/>
<path d="M140 82L150 80V96L138 92Z" fill="#5e8a3c"/>
<path d="M0 106C8 102 18 103 27 107V113H0Z" fill="#b9c4b0"/>
</g>
</svg>

<span class="t" style="left:487.4px;top:415.9px;font-size:12.5px;line-height:18px;letter-spacing:0.185px;">0000445584</span>
<span class="t" style="left:592.4px;top:415.9px;font-size:12.5px;line-height:18px;letter-spacing:0.149px;">30 Wombat Road Sydney</span>
<span class="t" style="left:804.4px;top:415.9px;font-size:12.5px;line-height:18px;letter-spacing:-0.006px;">Residential For Sale</span>
<span class="t" style="left:957.6px;top:415.9px;font-size:12.5px;line-height:18px;letter-spacing:0.265px;">House</span>
<span class="t" style="left:1078.7px;top:415.9px;font-size:12.5px;line-height:18px;letter-spacing:0.292px;">Exchanged/Unconditional</span>
<span class="t" style="left:1273.9px;top:415.9px;font-size:12.5px;line-height:18px;letter-spacing:0.460px;">19/10/2020</span>
<span class="t" style="left:1373.9px;top:415.9px;font-size:12.5px;line-height:18px;letter-spacing:-0.028px;">$1,000,000.00 - $1,200,000.00</span>
<span class="t" style="left:1595.4px;top:415.9px;font-size:12.5px;line-height:18px;letter-spacing:-0.164px;">1,100,000.00</span>
<span class="t" style="left:1711.0px;top:415.9px;font-size:13.2px;line-height:18px;letter-spacing:0.541px;">No</span>
<svg class="ph" style="top:498px" viewBox="0 0 150 113" preserveAspectRatio="none"><defs><linearGradient id="s2" x1="0" y1="0" x2="0" y2="1"><stop offset="0" stop-color="#93b7e6"/><stop offset=".4" stop-color="#b9d1ee"/><stop offset="1" stop-color="#dfe9f5"/></linearGradient><filter id="b2"><feGaussianBlur stdDeviation=".5"/></filter><filter id="c2"><feGaussianBlur stdDeviation="2.2"/></filter></defs>
<rect width="150" height="113" fill="url(#s2)"/>
<g filter="url(#c2)"><ellipse cx="30" cy="24" rx="34" ry="9" fill="#e4ecf6"/><ellipse cx="62" cy="30" rx="26" ry="7" fill="#dde8f4"/><ellipse cx="18" cy="38" rx="22" ry="7" fill="#e2ebf5"/><ellipse cx="70" cy="8" rx="22" ry="7" fill="#6f9fdc"/></g>
<g filter="url(#b2)">
<ellipse cx="100" cy="12" rx="16" ry="10" fill="#5f7444"/><ellipse cx="118" cy="8" rx="18" ry="9" fill="#5f7444"/><ellipse cx="135" cy="14" rx="14" ry="12" fill="#5f7444"/><ellipse cx="92" cy="30" rx="12" ry="10" fill="#5f7444"/><ellipse cx="112" cy="28" rx="16" ry="12" fill="#5f7444"/><ellipse cx="130" cy="32" rx="11" ry="10" fill="#5f7444"/><ellipse cx="143" cy="24" rx="6" ry="7" fill="#61763f"/><ellipse cx="100" cy="46" rx="12" ry="9" fill="#5f7444"/><ellipse cx="122" cy="48" rx="10" ry="8" fill="#5f7444"/><ellipse cx="88" cy="22" rx="8" ry="7" fill="#5f7444"/><ellipse cx="108" cy="60" rx="8" ry="6" fill="#5f7444"/><ellipse cx="99.7" cy="34.7" rx="3.1" ry="2.6" fill="#44582e"/><ellipse cx="88.3" cy="2.8" rx="4.5" ry="3.7" fill="#6f8547"/><ellipse cx="96.7" cy="45.0" rx="3.6" ry="2.7" fill="#44582e"/><ellipse cx="140.8" cy="15.9" rx="2.5" ry="2.2" fill="#44582e"/><ellipse cx="128.3" cy="5.8" rx="4.3" ry="3.1" fill="#4a5f32"/><ellipse cx="86.0" cy="53.9" rx="3.4" ry="3.0" fill="#44582e"/><ellipse cx="144.8" cy="25.7" rx="4.4" ry="4.3" fill="#44582e"/><ellipse cx="92.9" cy="23.9" rx="2.1" ry="1.4" fill="#44582e"/><ellipse cx="147.7" cy="28.2" rx="3.9" ry="3.0" fill="#6f8547"/><ellipse cx="128.3" cy="11.8" rx="4.6" ry="4.1" fill="#4a5f32"/><ellipse cx="97.9" cy="51.9" rx="3.7" ry="2.4" fill="#6f8547"/><ellipse cx="115.8" cy="40.3" rx="3.5" ry="3.2" fill="#6f8547"/><ellipse cx="111.1" cy="11.0" rx="2.9" ry="2.7" fill="#44582e"/><ellipse cx="86.9" cy="38.9" rx="2.1" ry="1.8" fill="#6f8547"/><ellipse cx="144.8" cy="18.7" rx="2.7" ry="2.0" fill="#4a5f32"/><ellipse cx="89.1" cy="38.0" rx="2.1" ry="2.1" fill="#64793f"/><ellipse cx="103.2" cy="17.8" rx="4.1" ry="3.0" fill="#6f8547"/><ellipse cx="109.5" cy="54.0" rx="4.0" ry="3.4" fill="#4a5f32"/><ellipse cx="146.1" cy="32.4" rx="3.3" ry="3.2" fill="#64793f"/><ellipse cx="112.9" cy="17.5" rx="2.9" ry="1.8" fill="#6f8547"/><ellipse cx="111.4" cy="36.8" rx="2.1" ry="1.3" fill="#64793f"/><ellipse cx="125.4" cy="30.0" rx="4.0" ry="3.4" fill="#6f8547"/><ellipse cx="102.4" cy="31.4" rx="3.8" ry="3.7" fill="#4a5f32"/><ellipse cx="100.6" cy="29.4" rx="3.8" ry="2.5" fill="#6f8547"/><ellipse cx="96.2" cy="47.5" rx="4.5" ry="3.3" fill="#6f8547"/><ellipse cx="108.9" cy="48.3" rx="2.1" ry="1.5" fill="#64793f"/><ellipse cx="98.7" cy="50.2" rx="2.7" ry="2.4" fill="#64793f"/><ellipse cx="126.9" cy="7.8" rx="3.8" ry="3.3" fill="#6f8547"/><ellipse cx="98.8" cy="50.6" rx="4.9" ry="3.6" fill="#4a5f32"/><ellipse cx="126.9" cy="55.1" rx="3.4" ry="3.1" fill="#64793f"/><ellipse cx="86.2" cy="59.5" rx="2.9" ry="2.8" fill="#64793f"/><ellipse cx="106.4" cy="51.7" rx="2.3" ry="1.9" fill="#6f8547"/><ellipse cx="111.8" cy="33.1" rx="4.5" ry="3.4" fill="#44582e"/><ellipse cx="111.5" cy="27.2" rx="3.2" ry="2.1" fill="#44582e"/><ellipse cx="84.3" cy="58.6" rx="4.6" ry="3.8" fill="#44582e"/><ellipse cx="127.8" cy="33.1" rx="2.9" ry="2.7" fill="#6f8547"/><ellipse cx="140.8" cy="52.3" rx="2.6" ry="2.4" fill="#a9c6ea"/><ellipse cx="98.3" cy="54.8" rx="2.2" ry="2.1" fill="#a9c6ea"/><ellipse cx="142.8" cy="37.2" rx="1.2" ry="0.8" fill="#a9c6ea"/><ellipse cx="111.6" cy="41.8" rx="1.9" ry="1.2" fill="#bcd3ee"/><ellipse cx="143.5" cy="12.1" rx="1.4" ry="1.3" fill="#bcd3ee"/><ellipse cx="99.2" cy="17.9" rx="1.4" ry="0.9" fill="#a9c6ea"/><ellipse cx="137.2" cy="55.8" rx="2.3" ry="1.9" fill="#a9c6ea"/><ellipse cx="125.7" cy="27.6" rx="2.3" ry="1.6" fill="#a9c6ea"/><ellipse cx="123.4" cy="28.8" rx="1.9" ry="1.8" fill="#a9c6ea"/><ellipse cx="136.3" cy="8.5" rx="1.3" ry="1.3" fill="#bcd3ee"/><ellipse cx="140.4" cy="10.7" rx="1.9" ry="1.3" fill="#bcd3ee"/><ellipse cx="99.7" cy="26.8" rx="1.7" ry="1.3" fill="#bcd3ee"/><ellipse cx="105.9" cy="23.8" rx="1.4" ry="1.2" fill="#a9c6ea"/><ellipse cx="115.8" cy="10.3" rx="1.4" ry="1.1" fill="#bcd3ee"/>
<path d="M126 34L129 33L131.500 60L132 103H126.500L127 60Z" fill="#8c8272"/><path d="M121 40L123 39.500L126.500 70V103H124.500L124 70Z" fill="#7d7466"/><path d="M128 34L138 18M127 38L116 22M130 44L142 30" stroke="#6d6558" stroke-width="1" fill="none"/>
<path d="M109 78L114 74L122 76L130 73L138 76L144 72L150 75V100H109Z" fill="#3e5e2c"/>
<ellipse cx="118" cy="84" rx="7" ry="9" fill="#2f4a26"/>
<path d="M134 84H150V92H134Z" fill="#6a7a34"/>
<ellipse cx="8" cy="50" rx="12" ry="12" fill="#2f4a2a"/><ellipse cx="20" cy="62" rx="10" ry="14" fill="#2f4a2a"/><ellipse cx="6" cy="72" rx="10" ry="16" fill="#2f4a2a"/><ellipse cx="18" cy="82" rx="12" ry="10" fill="#2f4a2a"/><ellipse cx="26" cy="50" rx="5" ry="8" fill="#2f4a2a"/><ellipse cx="17.4" cy="77.1" rx="4.0" ry="3.4" fill="#456a36"/><ellipse cx="14.8" cy="82.0" rx="3.9" ry="3.4" fill="#3b5a30"/><ellipse cx="25.2" cy="45.7" rx="3.2" ry="2.4" fill="#3b5a30"/><ellipse cx="2.9" cy="52.5" rx="3.8" ry="2.7" fill="#27401f"/><ellipse cx="25.7" cy="78.3" rx="2.4" ry="1.6" fill="#3b5a30"/><ellipse cx="17.3" cy="46.3" rx="2.0" ry="1.4" fill="#3b5a30"/><ellipse cx="6.0" cy="89.1" rx="4.2" ry="3.0" fill="#27401f"/><ellipse cx="5.6" cy="83.8" rx="3.6" ry="3.5" fill="#3b5a30"/><ellipse cx="19.3" cy="88.3" rx="4.2" ry="2.6" fill="#27401f"/><ellipse cx="11.6" cy="86.8" rx="2.7" ry="1.9" fill="#27401f"/><ellipse cx="16.9" cy="40.2" rx="3.7" ry="2.3" fill="#27401f"/><ellipse cx="9.9" cy="55.3" rx="3.7" ry="3.0" fill="#3b5a30"/><ellipse cx="19.7" cy="42.9" rx="4.4" ry="4.3" fill="#3b5a30"/><ellipse cx="10.0" cy="60.2" rx="3.4" ry="2.5" fill="#27401f"/><ellipse cx="16.2" cy="40.5" rx="2.1" ry="1.8" fill="#3b5a30"/><ellipse cx="26.7" cy="46.0" rx="2.6" ry="1.9" fill="#27401f"/><ellipse cx="9.9" cy="66.2" rx="3.9" ry="3.3" fill="#3b5a30"/><ellipse cx="21.9" cy="58.4" rx="2.7" ry="2.7" fill="#27401f"/>
<path d="M21.500 44L38 27.500L41 28L54 29.500L97 42.500L109 55L104 56L97 47L72 38L70 36.500L54 33L39 31L25 45Z" fill="#8a7f77"/>
<path d="M24.500 45L38.500 31L71 38V66H24.500Z" fill="#aaa69d"/>
<path d="M71 38L97 47V70H71Z" fill="#4c4a45"/>
<rect x="86" y="46" width="8.500" height="18" fill="#d9d8d0"/>
<rect x="94.500" y="47" width="15" height="26" fill="#8b8f90"/><rect x="96" y="49" width="6" height="9" fill="#5c6670"/><rect x="103" y="62" width="6" height="7" fill="#c9d0d6"/>
<rect x="33" y="43" width="11.500" height="14" fill="#5a554c"/><rect x="34.500" y="44.500" width="3.500" height="11.500" fill="#cfcfc6"/><rect x="39.500" y="44.500" width="3.500" height="11.500" fill="#c4c4ba"/>
<rect x="47" y="40" width="9" height="20" fill="#4e4a43"/><rect x="49" y="42" width="2.200" height="16" fill="#9b978c"/><rect x="52.500" y="42" width="2.200" height="16" fill="#8d897f"/>
<rect x="27" y="42" width="5" height="14" fill="#8e8a80"/>
<path d="M44.800 32.500V57M57 35V58" stroke="#5f5a52" stroke-width="1"/>
<path d="M66.500 48L74.500 39.500" stroke="#d0d0cb" stroke-width="1.200"/><path d="M66.500 48V100" stroke="#d0d0cb" stroke-width="1"/>
<rect x="23.500" y="57" width="43" height="8" fill="#59534b"/><path d="M66.500 58L88 64V71L66.500 65.500Z" fill="#4d4943"/><rect x="94" y="62" width="15.500" height="9" fill="#5b5f5e"/>
<path d="M26 64.500H66.500L81 68V71.500L66.500 68.500H26Z" fill="#dedcd4"/>
<rect x="30.500" y="66.500" width="79" height="30" fill="#3a3a37"/>
<rect x="80.500" y="70" width="29" height="20" fill="#c7c7c2"/><rect x="83" y="73" width="5" height="13" fill="#3b3f42"/><rect x="89.500" y="73" width="5" height="13" fill="#4a4e52"/><rect x="101" y="75" width="4" height="12" fill="#5a6066"/>
<rect x="25" y="70" width="9" height="20" fill="#c9c8c2"/>
<rect x="34" y="76" width="5.500" height="12" fill="#6b6f72"/>
<rect x="67" y="78" width="10.500" height="19" fill="#d8d7d2"/><rect x="68.500" y="79.500" width="3.200" height="16" fill="#2f3235"/><rect x="73" y="79.500" width="3.200" height="16" fill="#2f3235"/>
<rect x="41" y="80" width="6" height="13" fill="#d5d4cf"/><rect x="42.200" y="81" width="3.600" height="11" fill="#33363a"/>
<rect x="30.500" y="69" width="3.400" height="24" fill="#e3e2dc"/><rect x="47.900" y="67" width="4.200" height="30" fill="#ebeae5"/><rect x="61.700" y="64" width="4.900" height="38" fill="#efeee9"/><rect x="77.700" y="68" width="2.900" height="24" fill="#deddd7"/>
<rect x="0" y="96.500" width="150" height="16.500" fill="#55852f"/>
<rect x="110" y="98.500" width="40" height="14.500" fill="#5f8f35"/>
<ellipse cx="26" cy="100" rx="18" ry="12" fill="#4c782d"/><ellipse cx="8" cy="98" rx="9" ry="7" fill="#3f6a28"/><ellipse cx="50" cy="104" rx="9" ry="9" fill="#4b752e"/>
<ellipse cx="93" cy="100" rx="17" ry="13" fill="#76983a"/><ellipse cx="84" cy="92" rx="7" ry="5" fill="#5f8a36"/>
<g fill="#d9c94a"><circle cx="86" cy="96" r="1"/><circle cx="92" cy="92" r="1"/><circle cx="98" cy="97" r="1"/><circle cx="90" cy="102" r="1"/><circle cx="101" cy="104" r="1"/><circle cx="95" cy="107" r="1"/><circle cx="84" cy="105" r="1"/><circle cx="104" cy="94" r="1"/></g>
<g fill="#c9782c"><circle cx="138" cy="88" r="1"/><circle cx="144" cy="86" r="1"/><circle cx="141" cy="91" r="1"/><circle cx="147" cy="90" r="1"/><circle cx="70" cy="100" r="1"/><circle cx="58" cy="99" r="1"/></g>
<rect x="19" y="107" width="15" height="6" fill="#20302a"/><rect x="47" y="108.500" width="12.500" height="4.500" fill="#1f3a40"/><rect x="80" y="110" width="9" height="3" fill="#22302a"/>
</g>
</svg>

<span class="t" style="left:487.4px;top:546.9px;font-size:12.5px;line-height:18px;letter-spacing:0.185px;">0000445588</span>
<span class="t" style="left:592.4px;top:546.9px;font-size:12.5px;line-height:18px;letter-spacing:0.135px;">40 Aston Wilde Lane Sydney</span>
<span class="t" style="left:804.4px;top:546.9px;font-size:12.5px;line-height:18px;letter-spacing:-0.006px;">Residential For Sale</span>
<span class="t" style="left:957.6px;top:546.9px;font-size:12.5px;line-height:18px;letter-spacing:0.265px;">House</span>
<span class="t" style="left:1078.7px;top:546.9px;font-size:12.5px;line-height:18px;letter-spacing:0.292px;">Exchanged/Unconditional</span>
<span class="t" style="left:1273.9px;top:546.9px;font-size:12.5px;line-height:18px;letter-spacing:0.460px;">19/10/2020</span>
<span class="t" style="left:1373.9px;top:546.9px;font-size:12.5px;line-height:18px;letter-spacing:-0.028px;">$1,200,000.00 - $1,300,000.00</span>
<span class="t" style="left:1595.4px;top:546.9px;font-size:12.5px;line-height:18px;letter-spacing:-0.139px;">1,250,000</span>
<span class="t" style="left:1711.0px;top:546.9px;font-size:13.2px;line-height:18px;letter-spacing:0.541px;">No</span>
<svg class="ph" style="top:629px" viewBox="0 0 150 113" preserveAspectRatio="none"><defs><linearGradient id="s3" x1="0" y1="0" x2="1" y2="0"><stop offset="0" stop-color="#8dafd9"/><stop offset=".45" stop-color="#b9cfe6"/><stop offset=".7" stop-color="#cfdcea"/><stop offset="1" stop-color="#b4c4da"/></linearGradient><linearGradient id="l3" x1="0" y1="0" x2="0" y2="1"><stop offset="0" stop-color="#668a30"/><stop offset=".4" stop-color="#4f7226"/><stop offset="1" stop-color="#3c5a1d"/></linearGradient><linearGradient id="g3" x1="0" y1="0" x2="0" y2="1"><stop offset="0" stop-color="#62656e"/><stop offset="1" stop-color="#757882"/></linearGradient><filter id="b3"><feGaussianBlur stdDeviation=".45"/></filter><filter id="c3"><feGaussianBlur stdDeviation="2.4"/></filter></defs>
<rect width="150" height="60" fill="url(#s3)"/>
<g filter="url(#c3)">
<ellipse cx="22" cy="8" rx="26" ry="5" fill="#e6eef7"/><ellipse cx="8" cy="26" rx="16" ry="5" fill="#dfe9f4"/><ellipse cx="40" cy="22" rx="20" ry="5" fill="#7d99c2"/><ellipse cx="16" cy="40" rx="22" ry="6" fill="#6f8cb8"/>
<ellipse cx="62" cy="12" rx="14" ry="8" fill="#d9e6f2"/><ellipse cx="78" cy="26" rx="16" ry="7" fill="#e9f0f6"/>
<ellipse cx="100" cy="6" rx="22" ry="5" fill="#9fb0c6"/><ellipse cx="128" cy="14" rx="22" ry="6" fill="#8f9eb6"/><ellipse cx="96" cy="26" rx="10" ry="6" fill="#9aa6b8"/>
<ellipse cx="122" cy="28" rx="15" ry="7" fill="#f2d9a2"/><ellipse cx="112" cy="34" rx="10" ry="4" fill="#f0c98a"/><ellipse cx="142" cy="40" rx="10" ry="6" fill="#f4efe2"/><ellipse cx="146" cy="26" rx="6" ry="6" fill="#a9b4c6"/>
</g>
<g filter="url(#b3)">
<path d="M0 53H6V82H0Z" fill="#2f4a24"/><path d="M143 52H150V84H143Z" fill="#2f4a24"/><path d="M140 80L150 78V85H141Z" fill="#4f6f2a"/>
<path d="M0 48.600L45.500 38.200L50 39L66.600 34L103 39.500L150 49.800V51.500H83V50.500H0Z" fill="#3b3e45"/>
<path d="M66.600 34L103 39.500L150 49.800" stroke="#4a4d55" stroke-width=".8" fill="none"/>
<rect x="0" y="50.200" width="83" height="2" fill="#b9b9b9"/><rect x="83" y="51.200" width="67" height="2" fill="#a9a9aa"/>
<rect x="5.500" y="52.200" width="138" height="30.500" fill="#7a6450"/>
<rect x="5.500" y="52.200" width="6.700" height="31" fill="#dcdad6"/>
<rect x="17.300" y="53.400" width="27.800" height="26.400" fill="#dfe3e8"/><rect x="17.300" y="53.400" width="13" height="26.400" fill="#cfd4da"/>
<rect x="32" y="61" width="12.500" height="8" fill="#4a4e55"/><rect x="19" y="69" width="9" height="9" fill="#6a6e74"/><rect x="32" y="70" width="12" height="8" fill="#9a9ea6"/>
<rect x="30.800" y="53.400" width=".9" height="26.400" fill="#f4f4f4"/>
<rect x="48.600" y="52.200" width="8.300" height="31" fill="#e2e0dc"/>
<rect x="58.300" y="53.400" width="11.100" height="26.400" fill="#c9d0d6"/><rect x="61.500" y="54" width="4.500" height="25" fill="#eef0f2"/>
<rect x="71.900" y="52.200" width="5.100" height="30" fill="#dad8d4"/>
<rect x="77" y="53.400" width="59.700" height="28" fill="url(#g3)"/>
<rect x="136.700" y="52.200" width="6.200" height="30" fill="#86705a"/>
</g>
<rect x="0" y="82.200" width="80" height="30.800" fill="url(#l3)"/>
<path d="M72 82.200H150V113H80.500Z" fill="#786c5e"/>
<path d="M77 81.500H137V83.500H77Z" fill="#5e564c" opacity=".6"/>
<g filter="url(#b3)"><path d="M69.500 82L75 82L83 113H76Z" fill="#4a5a2a"/><circle cx="73" cy="86" r="2" fill="#7a3a34"/><circle cx="75" cy="92" r="2.200" fill="#6a3430"/><circle cx="77" cy="100" r="2.400" fill="#5a3a2c"/><circle cx="79" cy="107" r="2.400" fill="#6a3a30"/><circle cx="74" cy="96" r="1.500" fill="#8fae52"/><circle cx="78" cy="104" r="1.500" fill="#8fae52"/></g>
</svg>

<span class="t" style="left:487.4px;top:677.9px;font-size:12.5px;line-height:18px;letter-spacing:0.185px;">0000445741</span>
<span class="t" style="left:592.4px;top:677.9px;font-size:12.5px;line-height:18px;letter-spacing:0.106px;">50 Wilson Street Sydney</span>
<span class="t" style="left:804.4px;top:677.9px;font-size:12.5px;line-height:18px;letter-spacing:-0.006px;">Residential For Sale</span>
<span class="t" style="left:957.6px;top:677.9px;font-size:12.5px;line-height:18px;letter-spacing:0.265px;">House</span>
<span class="t" style="left:1078.7px;top:677.9px;font-size:12.5px;line-height:18px;letter-spacing:0.292px;">Exchanged/Unconditional</span>
<span class="t" style="left:1273.9px;top:677.9px;font-size:12.5px;line-height:18px;letter-spacing:0.460px;">21/10/2020</span>
<span class="t" style="left:1373.9px;top:677.9px;font-size:12.5px;line-height:18px;letter-spacing:-0.063px;">$1,250,000.00</span>
<span class="t" style="left:1595.4px;top:677.9px;font-size:12.5px;line-height:18px;letter-spacing:-0.164px;">1,250,000.00</span>
<span class="t" style="left:1711.0px;top:677.9px;font-size:13.2px;line-height:18px;letter-spacing:0.541px;">No</span>
</main>
<svg class="a" style="left:1050px;top:481px" width="22" height="28" viewBox="0 0 22 28"><path d="M7.700 16.400V4.200C7.700 2.100 10.600 2.100 10.600 4.200V8.100C11.500 7.300 13.500 7.500 13.500 9C14.400 8.300 16.600 8.500 16.600 10C17.600 9.300 19.700 9.600 19.700 11.500V19C19.700 23 16.200 25.700 12.400 25.700C9.500 25.700 7.500 23.600 6 21.600L3 17.600C1.500 15.800 3.500 14.100 5.300 15.100Z" fill="#fff" stroke="#1b2332" stroke-width="1.100" stroke-linejoin="round"/><path d="M10.600 8V12.600M13.500 9V12.600M16.600 10V12.700" stroke="#1b2332" stroke-width="1.100" stroke-linecap="round" fill="none"/></svg>

</body>
</html>
